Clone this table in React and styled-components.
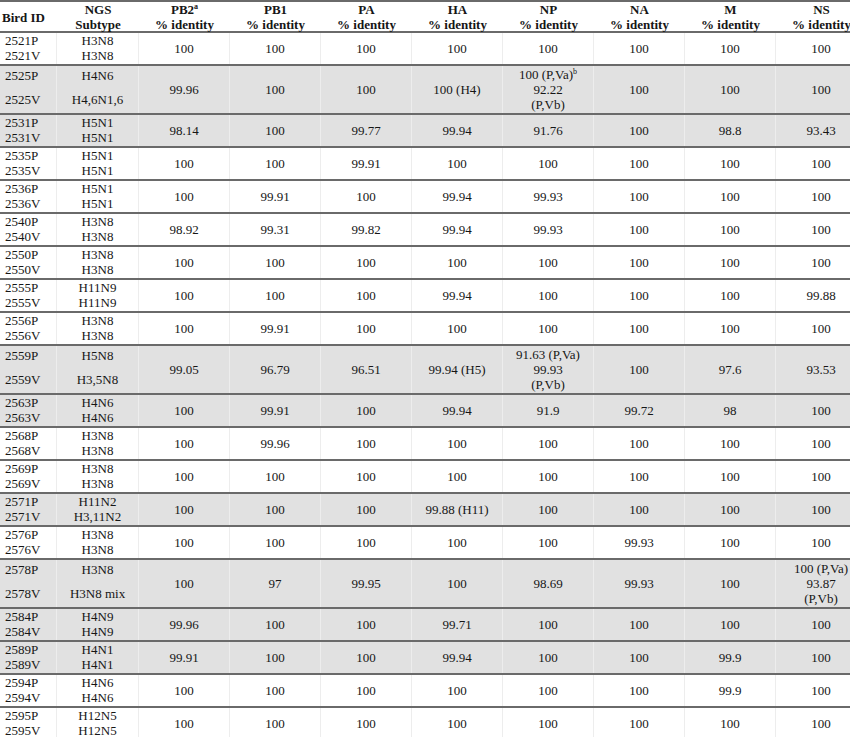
import React from 'react';
import styled, { createGlobalStyle } from 'styled-components';

const GlobalStyle = createGlobalStyle`
  html, body {
    margin: 0;
    padding: 0;
    background: #fff;
    overflow: hidden;
  }
  body {
    font-family: "Liberation Serif", "Times New Roman", serif;
    color: #161616;
  }
`;

const COLS = '57px 82px repeat(8, 91px)';

const Table = styled.div`
  width: 867px;
  border-top: 2px solid #6a6a6a;
  font-size: 13px;
  line-height: 15px;
`;

const HeaderRow = styled.div`
  display: grid;
  grid-template-columns: ${COLS};
  height: 29px;
`;

const HeadCell = styled.div`
  font-weight: bold;
  text-align: ${(p) => (p.$left ? 'left' : 'center')};
  padding-left: ${(p) => (p.$left ? '2px' : '0')};
  display: flex;
  flex-direction: column;
  justify-content: center;
  white-space: nowrap;
`;

const Row = styled.div`
  display: grid;
  grid-template-columns: ${COLS};
  border-top: 2px solid #6a6a6a;
  background: ${(p) => (p.$shaded ? '#e1e1e1' : '#fff')};
  height: ${(p) => (p.$tall ? '47px' : '31px')};
`;

const IdCell = styled.div`
  display: flex;
  flex-direction: column;
  justify-content: space-between;
  padding: ${(p) => (p.$tall ? '2px 0 6px' : '0 0 1px')};
  padding-left: ${(p) => (p.$left ? '5px' : '0')};
  text-align: ${(p) => (p.$left ? 'left' : 'center')};
  border-right: 1px solid #ededed;
  white-space: nowrap;
`;

const ValueCell = styled.div`
  display: flex;
  flex-direction: column;
  justify-content: center;
  align-items: center;
  text-align: center;
  border-right: 1px solid #ededed;
  white-space: nowrap;
`;

const Sup = styled.sup`
  font-size: 8px;
  line-height: 0;
  vertical-align: 5px;
`;

const genes = ['PB2', 'PB1', 'PA', 'HA', 'NP', 'NA', 'M', 'NS'];

const split = (a, b, c) => [a, b, c];

const rows = [
  { id: '2521', p: 'H3N8', v: 'H3N8', vals: ['100', '100', '100', '100', '100', '100', '100', '100'] },
  { id: '2525', p: 'H4N6', v: 'H4,6N1,6', shaded: true, tall: true,
    vals: ['99.96', '100', '100', '100 (H4)', split(<>100 (P,Va)<Sup>b</Sup></>, '92.22', '(P,Vb)'), '100', '100', '100'] },
  { id: '2531', p: 'H5N1', v: 'H5N1', shaded: true, vals: ['98.14', '100', '99.77', '99.94', '91.76', '100', '98.8', '93.43'] },
  { id: '2535', p: 'H5N1', v: 'H5N1', vals: ['100', '100', '99.91', '100', '100', '100', '100', '100'] },
  { id: '2536', p: 'H5N1', v: 'H5N1', vals: ['100', '99.91', '100', '99.94', '99.93', '100', '100', '100'] },
  { id: '2540', p: 'H3N8', v: 'H3N8', vals: ['98.92', '99.31', '99.82', '99.94', '99.93', '100', '100', '100'] },
  { id: '2550', p: 'H3N8', v: 'H3N8', vals: ['100', '100', '100', '100', '100', '100', '100', '100'] },
  { id: '2555', p: 'H11N9', v: 'H11N9', vals: ['100', '100', '100', '99.94', '100', '100', '100', '99.88'] },
  { id: '2556', p: 'H3N8', v: 'H3N8', vals: ['100', '99.91', '100', '100', '100', '100', '100', '100'] },
  { id: '2559', p: 'H5N8', v: 'H3,5N8', shaded: true, tall: true,
    vals: ['99.05', '96.79', '96.51', '99.94 (H5)', split('91.63 (P,Va)', '99.93', '(P,Vb)'), '100', '97.6', '93.53'] },
  { id: '2563', p: 'H4N6', v: 'H4N6', shaded: true, vals: ['100', '99.91', '100', '99.94', '91.9', '99.72', '98', '100'] },
  { id: '2568', p: 'H3N8', v: 'H3N8', vals: ['100', '99.96', '100', '100', '100', '100', '100', '100'] },
  { id: '2569', p: 'H3N8', v: 'H3N8', vals: ['100', '100', '100', '100', '100', '100', '100', '100'] },
  { id: '2571', p: 'H11N2', v: 'H3,11N2', shaded: true, vals: ['100', '100', '100', '99.88 (H11)', '100', '100', '100', '100'] },
  { id: '2576', p: 'H3N8', v: 'H3N8', vals: ['100', '100', '100', '100', '100', '99.93', '100', '100'] },
  { id: '2578', p: 'H3N8', v: 'H3N8 mix', shaded: true, tall: true,
    vals: ['100', '97', '99.95', '100', '98.69', '99.93', '100', split('100 (P,Va)', '93.87', '(P,Vb)')] },
  { id: '2584', p: 'H4N9', v: 'H4N9', shaded: true, vals: ['99.96', '100', '100', '99.71', '100', '100', '100', '100'] },
  { id: '2589', p: 'H4N1', v: 'H4N1', shaded: true, vals: ['99.91', '100', '100', '99.94', '100', '100', '99.9', '100'] },
  { id: '2594', p: 'H4N6', v: 'H4N6', vals: ['100', '100', '100', '100', '100', '100', '99.9', '100'] },
  { id: '2595', p: 'H12N5', v: 'H12N5', vals: ['100', '100', '100', '100', '100', '100', '100', '100'] },
];

function Value({ value }) {
  if (Array.isArray(value)) {
    return (
      <ValueCell>
        {value.map((line, i) => (
          <span key={i}>{line}</span>
        ))}
      </ValueCell>
    );
  }
  return <ValueCell>{value}</ValueCell>;
}

export default function App() {
  return (
    <>
      <GlobalStyle />
      <Table>
        <HeaderRow>
          <HeadCell $left>Bird ID</HeadCell>
          <HeadCell>
            <span>NGS</span>
            <span>Subtype</span>
          </HeadCell>
          {genes.map((g) => (
            <HeadCell key={g}>
              <span>
                {g}
                {g === 'PB2' && <Sup>a</Sup>}
              </span>
              <span>% identity</span>
            </HeadCell>
          ))}
        </HeaderRow>

        {rows.map((r) => (
          <Row key={r.id} $shaded={r.shaded} $tall={r.tall}>
            <IdCell $left $tall={r.tall}>
              <span>{r.id}P</span>
              <span>{r.id}V</span>
            </IdCell>
            <IdCell $tall={r.tall}>
              <span>{r.p}</span>
              <span>{r.v}</span>
            </IdCell>
            {r.vals.map((v, i) => (
              <Value key={i} value={v} />
            ))}
          </Row>
        ))}
      </Table>
    </>
  );
}
